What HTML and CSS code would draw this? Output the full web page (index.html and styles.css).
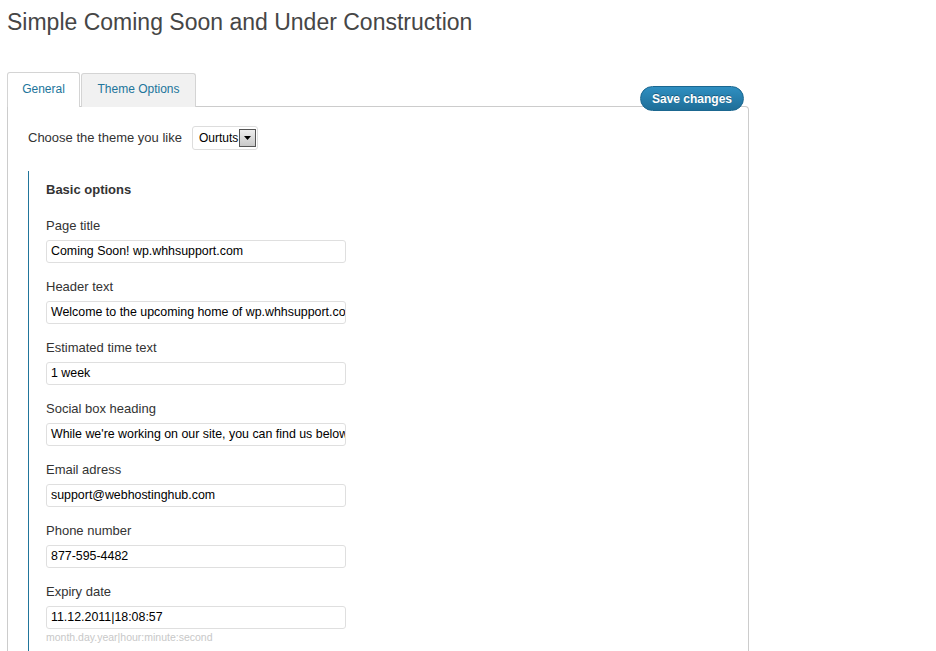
FILE: index.html
```html
<!DOCTYPE html>
<html>
<head>
<meta charset="utf-8">
<link rel="stylesheet" href="styles.css">
</head>
<body>
<div class="wrap">
  <h1 class="title">Simple Coming Soon and Under Construction</h1>
  <div class="tabbar">
    <div class="tabs">
      <div class="tab active">General</div>
      <div class="tab">Theme Options</div>
    </div>
    <button class="save">Save changes</button>
  </div>
  <div class="panel">
    <div class="theme-row">
      <span class="theme-label">Choose the theme you like</span>
      <div class="fake-select">
        <span class="sel-text">Ourtuts</span>
        <span class="sel-btn"><svg width="8" height="4" viewBox="0 0 8 4"><path d="M0 0H7L3.5 4Z" fill="#000"/></svg></span>
      </div>
    </div>
    <div class="fieldset">
      <div class="legend">Basic options</div>
      <div class="field"><div class="label">Page title</div><div class="input">Coming Soon! wp.whhsupport.com</div></div>
      <div class="field"><div class="label">Header text</div><div class="input">Welcome to the upcoming home of wp.whhsupport.com</div></div>
      <div class="field"><div class="label">Estimated time text</div><div class="input">1 week</div></div>
      <div class="field"><div class="label">Social box heading</div><div class="input">While we're working on our site, you can find us below</div></div>
      <div class="field"><div class="label">Email adress</div><div class="input">support@webhostinghub.com</div></div>
      <div class="field"><div class="label">Phone number</div><div class="input">877-595-4482</div></div>
      <div class="field"><div class="label">Expiry date</div><div class="input">11.12.2011|18:08:57</div><div class="hint">month.day.year|hour:minute:second</div></div>
    </div>
  </div>
</div>
</body>
</html>
```
FILE: styles.css
```css
html, body {
  margin: 0;
  padding: 0;
  background: #fff;
  font-family: "Liberation Sans", Arial, sans-serif;
  overflow: hidden;
}
.wrap {
  padding-left: 7px;
  width: 742px;
}
.title {
  margin: 0;
  padding-top: 8px;
  font-size: 23px;
  line-height: 28px;
  font-weight: normal;
  color: #464646;
  height: 64px;
}
.tabbar {
  display: flex;
  align-items: flex-end;
  height: 34px;
}
.tabs {
  display: flex;
  gap: 1px;
  align-self: stretch;
  align-items: flex-end;
}
.tab {
  box-sizing: border-box;
  border: 1px solid #d4d4d4;
  border-bottom: none;
  border-radius: 3px 3px 0 0;
  background: #f1f1f1;
  color: #21759b;
  font-size: 12px;
  position: relative;
  top: 1px;
  z-index: 1;
  text-align: center;
  padding: 0;
}
.tab.active {
  background: #fff;
  height: 35px;
  line-height: 32px;
  width: 73px;
}
.tab:not(.active) {
  width: 115px;
  height: 34px;
  line-height: 30px;
}
.save {
  margin-left: auto;
  margin-right: 5px;
  margin-bottom: -5px;
  position: relative;
  z-index: 2;
  width: 104px;
  height: 25px;
  border: 1px solid #1b6790;
  border-radius: 13px;
  background: linear-gradient(#2f8fc1, #1f6e98);
  color: #fff;
  font-family: "Liberation Sans", Arial, sans-serif;
  font-weight: bold;
  font-size: 12px;
  text-shadow: 0 -1px 0 rgba(0,0,0,0.3);
  padding: 0;
}
.panel {
  border: 1px solid #ccc;
  border-bottom: none;
  border-radius: 0 4px 0 0;
  padding: 18px 0 0 20px;
  height: 600px;
  box-sizing: border-box;
}
.theme-row {
  display: flex;
  align-items: center;
  height: 24px;
}
.theme-label {
  font-size: 13px;
  color: #333;
  margin-right: 10px;
}
.fake-select {
  display: flex;
  align-items: center;
  box-sizing: border-box;
  width: 66px;
  height: 24px;
  border: 1px solid #ddd;
  border-radius: 3px;
  padding-left: 6px;
  font-size: 12px;
  color: #000;
  position: relative;
  top: 1px;
}
.sel-text {
  white-space: nowrap;
  margin-right: 1px;
}
.sel-btn {
  width: 17px;
  height: 18px;
  box-sizing: border-box;
  border: 1px solid #555;
  background: linear-gradient(#eee, #c8c8c8);
  display: flex;
  align-items: center;
  justify-content: center;
  flex-shrink: 0;
}
.fieldset {
  margin-top: 22px;
  border-left: 1px solid #21759b;
  padding: 11px 0 0 17px;
  height: 500px;
}
.legend {
  font-size: 13px;
  font-weight: bold;
  color: #333;
  line-height: 16px;
  margin-bottom: 20px;
}
.field {
  margin-bottom: 16px;
}
.label {
  font-size: 13px;
  color: #333;
  line-height: 16px;
  margin-bottom: 6px;
}
.input {
  box-sizing: border-box;
  width: 300px;
  height: 23px;
  border: 1px solid #dfdfdf;
  border-radius: 3px;
  font-size: 12.4px;
  color: #000;
  line-height: 21px;
  padding-left: 4px;
  white-space: nowrap;
  overflow: hidden;
}
.hint {
  font-size: 10.5px;
  color: #c8c8c8;
  line-height: 14px;
  margin-top: 1px;
}
```
